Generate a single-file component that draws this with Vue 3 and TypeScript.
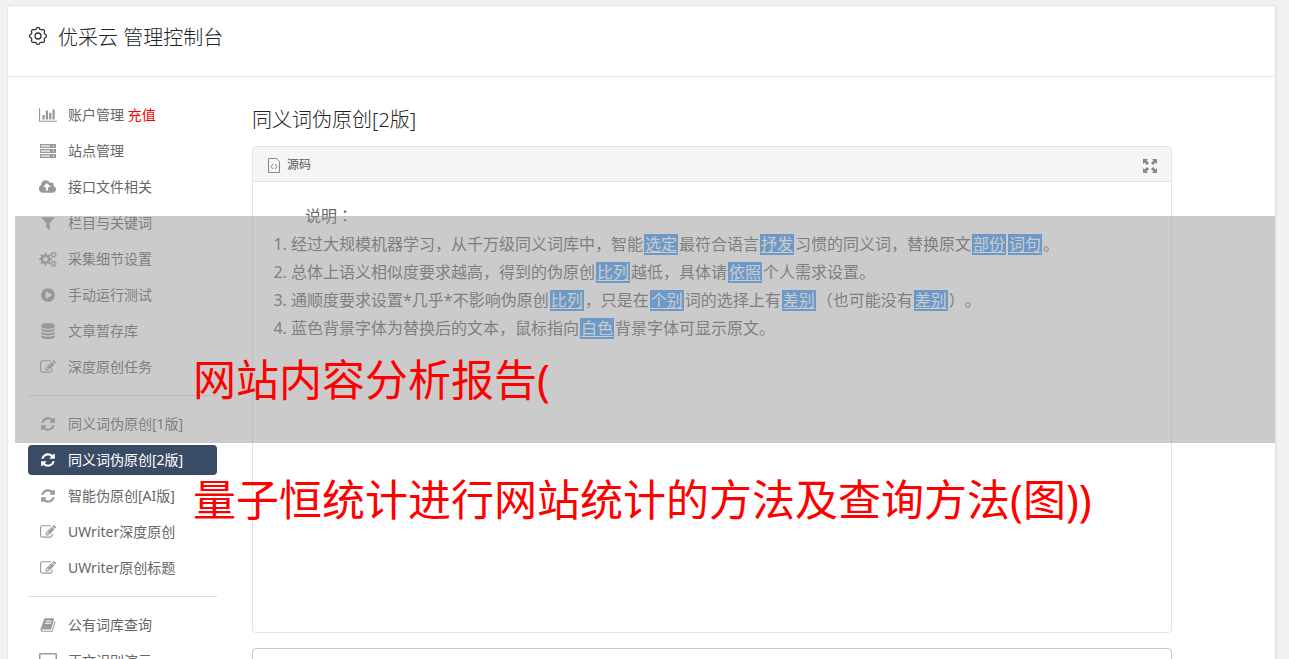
<script setup lang="ts">
interface Icon {
  box: string
  width: number
  d: string
  soft?: string
}

interface NavItem {
  label: string
  icon: string
  extra?: string
  active?: boolean
}

interface Piece {
  text: string
  swapped?: boolean
}

// Gear outline with square-shouldered teeth, followed by its round hole.
function gear(cx: number, cy: number, outer: number, inner: number, hole: number, teeth: number): string {
  const points: string[] = []
  const step = (Math.PI * 2) / teeth
  for (let i = 0; i < teeth; i++) {
    const a = i * step
    const corners: [number, number][] = [
      [-0.3, inner],
      [-0.2, outer],
      [0.2, outer],
      [0.3, inner],
    ]
    for (const [offset, r] of corners) {
      const x = cx + Math.cos(a + offset * step) * r
      const y = cy + Math.sin(a + offset * step) * r
      points.push(`${x.toFixed(1)} ${y.toFixed(1)}`)
    }
  }
  return `M${points.join('L')}ZM${cx - hole} ${cy}a${hole} ${hole} 0 1 0 ${hole * 2} 0a${hole} ${hole} 0 1 0 ${-hole * 2} 0z`
}

const icons: Record<string, Icon> = {
  chart: {
    box: '0 0 2048 1792',
    width: 18,
    d: 'M640 896v512h-256v-512h256zm384-512v1024h-256v-1024h256zm1024 1152v128h-2048v-1536h128v1408h1920zm-640-896v768h-256v-768h256zm384-384v1152h-256v-1152h256z',
  },
  server: {
    box: '0 0 16 16',
    width: 16,
    d: 'M0 1h16v4H0zM1 2v2h9V2zM13 2v2h1V2zM0 6h16v4H0zM1 7v2h9V7zM13 7v2h1V7zM0 11h16v4H0zM1 12v2h9v-2zM13 12v2h1v-2z',
    soft: 'M0 1h16v4H0zM0 6h16v4H0zM0 11h16v4H0z',
  },
  cloud: {
    box: '0 0 1920 1792',
    width: 18,
    d: 'M1216 864q0-14-9-23l-352-352q-9-9-23-9t-23 9l-351 351q-10 12-10 24 0 14 9 23t23 9h224v352q0 13 9.5 22.5t22.5 9.5h192q13 0 22.5-9.5t9.5-22.5v-352h224q13 0 22.5-9.5t9.5-22.5zm640 288q0 159-112.5 271.5t-271.5 112.5h-1088q-185 0-316.5-131.5t-131.5-316.5q0-130 70-240t188-165q-2-30-2-43 0-212 150-362t362-150q156 0 285.5 87t188.5 231q71-62 166-62 106 0 181 75t75 181q0 76-41 138 130 31 213.5 135.5t83.5 238.5z',
  },
  filter: {
    box: '0 0 1792 1792',
    width: 16,
    d: 'M1595 295q17 41-14 70l-493 493v742q0 42-39 59-13 5-25 5-27 0-45-19l-256-256q-19-19-19-45v-486l-493-493q-31-29-14-70 17-39 59-39h1280q42 0 59 39z',
  },
  cogs: {
    box: '0 0 18 16',
    width: 18,
    d: gear(6.5, 8.2, 6.4, 4.7, 2.3, 8) + gear(14.5, 3.8, 3.3, 2.3, 1.2, 6) + gear(14.5, 12.8, 3.3, 2.3, 1.2, 6),
  },
  play: {
    box: '0 0 1792 1792',
    width: 16,
    d: 'M896 128q209 0 385.5 103t279.5 279.5 103 385.5-103 385.5-279.5 279.5-385.5 103-385.5-103-279.5-279.5-103-385.5 103-385.5 279.5-279.5 385.5-103zm384 823q32-18 32-55t-32-55l-544-320q-31-19-64-1-32 19-32 56v640q0 37 32 56 16 8 32 8 17 0 32-9z',
  },
  database: {
    box: '0 0 1792 1792',
    width: 16,
    d: 'M896 768q237 0 443-43t325-127v170q0 69-103 128t-280 93.5-385 34.5-385-34.5-280-93.5-103-128v-170q119 84 325 127t443 43zm0 768q237 0 443-43t325-127v170q0 69-103 128t-280 93.5-385 34.5-385-34.5-280-93.5-103-128v-170q119 84 325 127t443 43zm0-384q237 0 443-43t325-127v170q0 69-103 128t-280 93.5-385 34.5-385-34.5-280-93.5-103-128v-170q119 84 325 127t443 43zm0-1152q208 0 385 34.5t280 93.5 103 128v128q0 69-103 128t-280 93.5-385 34.5-385-34.5-280-93.5-103-128v-128q0-69 103-128t280-93.5 385-34.5z',
  },
  edit: {
    box: '0 0 1792 1792',
    width: 16,
    d: 'M888 1184l116-116-152-152-116 116v56h96v96h56zm440-720q-16-16-33 1l-350 350q-17 17-1 33t33-1l350-350q17-17 1-33zm80 594v190q0 119-84.5 203.5t-203.5 84.5h-832q-119 0-203.5-84.5t-84.5-203.5v-832q0-119 84.5-203.5t203.5-84.5h832q63 0 117 25 15 7 18 23 3 17-9 29l-49 49q-14 14-32 8-23-6-45-6h-832q-66 0-113 47t-47 113v832q0 66 47 113t113 47h832q66 0 113-47t47-113v-126q0-13 9-22l64-64q15-15 35-7t20 29zm-96-738l288 288-672 672h-288v-288zm444 132l-92 92-288-288 92-92q28-28 68-28t68 28l152 152q28 28 28 68t-28 68z',
  },
  refresh: {
    box: '0 0 1792 1792',
    width: 16,
    d: 'M1639 1056q0 5-1 7-64 268-268 434.5t-478 166.5q-146 0-282.5-55t-243.5-157l-129 129q-19 19-45 19t-45-19-19-45v-448q0-26 19-45t45-19h448q26 0 45 19t19 45-19 45l-137 137q71 66 161 102t187 36q134 0 250-65t186-179q11-17 53-117 8-23 30-23h192q13 0 22.5 9.5t9.5 22.5zm25-800v448q0 26-19 45t-45 19h-448q-26 0-45-19t-19-45 19-45l138-138q-148-137-349-137-134 0-250 65t-186 179q-11 17-53 117-8 23-30 23h-199q-13 0-22.5-9.5t-9.5-22.5v-7q65-268 270-434.5t480-166.5q146 0 284 55.5t245 156.5l130-129q19-19 45-19t45 19 19 45z',
  },
  book: {
    box: '0 0 1792 1792',
    width: 16,
    d: 'M1703 478q40 57 18 129l-275 906q-19 64-76.5 107.5t-122.5 43.5h-923q-77 0-148.5-53.5t-99.5-131.5q-24-67-2-127 0-4 3-27t4-37q1-8-3-21.5t-3-19.5q2-11 8-21t16.5-23.5 16.5-23.5q23-38 45-91.5t30-91.5q3-10 .5-30t-.5-28q3-11 17-28t17-23q21-36 42-92t25-90q1-9-2.5-32t.5-28q4-13 22-30.5t22-22.5q19-26 42.5-84.5t27.5-96.5q1-8-3-25.5t-2-26.5q2-8 9-18t18-23 17-21q8-12 16.5-30.5t15-35 16-36 19.5-32 26.5-23.5 36-11.5 47.5 5.5l-1 3q38-9 51-9h761q74 0 114 56t18 130l-274 906q-36 119-71.5 153.5t-128.5 34.5h-869q-27 0-38 15-11 16-1 43 24 70 144 70h923q29 0 56-15.5t35-41.5l300-987q7-22 5-57 38 15 59 43zm-1064 2q-4 13 2 22.5t20 9.5h608q13 0 25.5-9.5t16.5-22.5l21-64q4-13-2-22.5t-20-9.5h-608q-13 0-25.5 9.5t-16.5 22.5zm-83 256q-4 13 2 22.5t20 9.5h608q13 0 25.5-9.5t16.5-22.5l21-64q4-13-2-22.5t-20-9.5h-608q-13 0-25.5 9.5t-16.5 22.5z',
  },
  screen: {
    box: '0 0 18 16',
    width: 18,
    d: 'M1.5 0h15a1.5 1.5 0 0 1 1.5 1.5v10a1.5 1.5 0 0 1-1.5 1.5h-5v3h-5v-3h-5a1.5 1.5 0 0 1-1.5-1.5v-10a1.5 1.5 0 0 1 1.5-1.5zM1.5 1.5v8h15v-8z',
  },
}

const groups: NavItem[][] = [
  [
    { label: '账户管理', icon: 'chart', extra: '充值' },
    { label: '站点管理', icon: 'server' },
    { label: '接口文件相关', icon: 'cloud' },
    { label: '栏目与关键词', icon: 'filter' },
    { label: '采集细节设置', icon: 'cogs' },
    { label: '手动运行测试', icon: 'play' },
    { label: '文章暂存库', icon: 'database' },
    { label: '深度原创任务', icon: 'edit' },
  ],
  [
    { label: '同义词伪原创[1版]', icon: 'refresh' },
    { label: '同义词伪原创[2版]', icon: 'refresh', active: true },
    { label: '智能伪原创[AI版]', icon: 'refresh' },
    { label: 'UWriter深度原创', icon: 'edit' },
    { label: 'UWriter原创标题', icon: 'edit' },
  ],
  [
    { label: '公有词库查询', icon: 'book' },
    { label: '正文识别演示', icon: 'screen' },
  ],
]

// Replaced words are written between braces.
function parse(line: string): Piece[] {
  return line
    .split(/(\{[^}]+\})/)
    .filter((part) => part !== '')
    .map((part) => (part.startsWith('{') ? { text: part.slice(1, -1), swapped: true } : { text: part }))
}

const notes: Piece[][] = [
  '经过大规模机器学习，从千万级同义词库中，智能{选定}最符合语言{抒发}习惯的同义词，替换原文{部份}{词句}。',
  '总体上语义相似度要求越高，得到的伪原创{比列}越低，具体请{依照}个人需求设置。',
  '通顺度要求设置*几乎*不影响伪原创{比列}，只是在{个别}词的选择上有{差别}（也可能没有{差别}）。',
  '蓝色背景字体为替换后的文本，鼠标指向{白色}背景字体可显示原文。',
].map(parse)

// Header gear: a closed wave of rounded teeth.
function wavyGear(cx: number, cy: number, radius: number, wave: number, teeth: number): string {
  const points: string[] = []
  const count = teeth * 12
  for (let i = 0; i < count; i++) {
    const a = (i / count) * Math.PI * 2
    const r = radius + wave * Math.tanh(2 * Math.cos(a * teeth))
    points.push(`${(cx + Math.cos(a) * r).toFixed(2)} ${(cy + Math.sin(a) * r).toFixed(2)}`)
  }
  return `M${points.join('L')}Z`
}
const titleGear = wavyGear(10, 10, 7.7, 0.7, 8)
</script>

<template>
  <div class="page">
    <div class="panel">
      <header class="top">
        <svg class="top-icon" viewBox="0 0 20 20" aria-hidden="true">
          <path :d="titleGear" />
          <circle cx="10" cy="10" r="3" />
        </svg>
        <h1>优采云 管理控制台</h1>
      </header>
      <div class="body">
        <nav class="side">
          <ul v-for="(group, g) in groups" :key="g">
            <li v-for="item in group" :key="item.label">
              <a href="#" :class="{ active: item.active }">
                <span class="nav-icon">
                  <svg :viewBox="icons[item.icon].box" :width="icons[item.icon].width" height="16" aria-hidden="true">
                    <path v-if="icons[item.icon].soft" class="soft" :d="icons[item.icon].soft" />
                    <path fill-rule="evenodd" :d="icons[item.icon].d" />
                  </svg>
                </span>
                <span>{{ item.label }}<em v-if="item.extra">&nbsp;{{ item.extra }}</em></span>
              </a>
            </li>
          </ul>
        </nav>
        <main>
          <h2>同义词伪原创[2版]</h2>
          <section class="editor">
            <div class="toolbar">
              <button type="button" class="source">
                <svg width="12" height="15" viewBox="0 0 12 15" aria-hidden="true">
                  <path d="M.5.5h8l3 3v11H.5z" />
                  <path d="M5 6L3 8.5L5 11M7 6L9 8.5L7 11" />
                </svg>
                源码
              </button>
              <button type="button" class="expand" aria-label="全屏">
                <svg width="14" height="14" viewBox="0 0 14 14" aria-hidden="true">
                  <path
                    d="M0 0h5L3.5 1.5L6 4L4 6L1.5 3.5L0 5zM14 0v5l-1.5-1.5L10 6L8 4l2.5-2.5L9 0zM0 14V9l1.5 1.5L4 8l2 2l-2.5 2.5L5 14zM14 14H9l1.5-1.5L8 10l2-2l2.5 2.5L14 9z"
                  />
                </svg>
              </button>
            </div>
            <div class="content">
              <p>说明<span class="colon">：</span></p>
              <ol>
                <li v-for="(line, i) in notes" :key="i">
                  <template v-for="(piece, j) in line" :key="j"
                    ><u v-if="piece.swapped">{{ piece.text }}</u
                    ><template v-else>{{ piece.text }}</template></template
                  >
                </li>
              </ol>
            </div>
          </section>
          <textarea aria-label="原文"></textarea>
        </main>
      </div>
    </div>
    <div class="banner">
      <p>网站内容分析报告(</p>
      <p>量子恒统计进行网站统计的方法及查询方法(图))</p>
    </div>
  </div>
</template>

<style>
body {
  margin: 0;
  background: #f1f1f1;
}
</style>

<style scoped>
.page {
  position: relative;
  box-sizing: border-box;
  height: 100vh;
  overflow: hidden;
  padding: 5px 12px 0 7px;
  background: #f1f1f1;
  color: #666;
  font-family: 'Noto Sans', 'Noto Sans CJK SC', sans-serif;
  font-size: 14px;
  font-weight: 400;
  text-spacing-trim: space-all;
}
h1,
h2,
p,
ul,
ol {
  margin: 0;
  padding: 0;
}
.panel {
  min-height: 100vh;
  border: 1px solid #e5e5e5;
  border-right-width: 2px;
  border-radius: 4px;
  background: #fff;
}
.top {
  display: flex;
  align-items: center;
  gap: 10px;
  height: 64px;
  padding: 0 20px 6px;
  border-bottom: 1px solid #e5e5e5;
}
.top-icon {
  width: 20px;
  height: 20px;
  margin-bottom: 4px;
  fill: none;
  stroke: #333;
  stroke-width: 1.3;
  stroke-linejoin: round;
}
h1,
h2 {
  color: #222;
  font-size: 20px;
  font-weight: 300;
  line-height: 30px;
}
.body {
  display: flex;
  align-items: flex-start;
  gap: 35px;
  padding: 23px 103px 0 20px;
}
.side {
  flex: none;
  width: 189px;
}
.side ul {
  display: flex;
  flex-direction: column;
  gap: 6px;
  list-style: none;
}
.side ul + ul {
  margin-top: 13px;
  padding-top: 13px;
  border-top: 1px solid #ddd;
}
.side a {
  display: flex;
  align-items: center;
  gap: 10px;
  height: 30px;
  padding-left: 10px;
  border-radius: 4px;
  color: #666;
  line-height: 30px;
  text-decoration: none;
  white-space: nowrap;
}
.nav-icon {
  display: flex;
  justify-content: center;
  width: 20px;
}
.nav-icon svg {
  fill: #999;
}
.nav-icon .soft {
  opacity: 0.4;
}
.side em {
  color: #f00;
  font-style: normal;
}
.side a.active {
  background: #3a4b66;
  color: #fff;
}
.active svg {
  fill: #fff;
}
main {
  flex: 1;
  min-width: 0;
  padding-top: 5px;
}
.editor {
  box-sizing: border-box;
  min-height: 487px;
  margin-top: 11px;
  border: 1px solid #e5e5e5;
  border-radius: 4px;
}
.toolbar {
  display: flex;
  align-items: center;
  justify-content: space-between;
  height: 34px;
  padding: 0 14px 0 15px;
  border-bottom: 1px solid #e5e5e5;
  border-radius: 4px 4px 0 0;
  background: #f5f5f5;
}
button {
  display: flex;
  align-items: center;
  padding: 0;
  border: 0;
  background: none;
  color: #555;
  font: inherit;
  font-size: 12px;
}
.source {
  gap: 7px;
}
.source svg {
  margin-top: 2px;
  fill: none;
  stroke: #888;
}
.expand svg {
  margin-top: 4px;
  fill: #888;
}
.content {
  padding: 19px 20px;
  font-size: 16px;
  line-height: 28px;
}
.content p {
  text-indent: 32px;
}
.colon {
  font-family: 'Noto Sans CJK JP', sans-serif;
}
ol {
  padding-left: 18px;
}
u {
  margin: 0 1px;
  padding: 0 1px;
  background: linear-gradient(#409af8, #409af8) center / 100% 21px no-repeat;
  color: #fff;
  text-underline-offset: 2px;
}
textarea {
  display: block;
  box-sizing: border-box;
  width: 100%;
  height: 120px;
  margin-top: 15px;
  border: 1px solid #c8c8c8;
  border-radius: 4px;
  background: #fff;
  resize: none;
}
.banner {
  position: absolute;
  top: 216px;
  left: 15px;
  right: 14px;
  box-sizing: border-box;
  height: 227px;
  padding: 104px 0 0 178px;
  background: rgba(151, 151, 151, 0.5);
  color: #f00;
  font-size: 43px;
  line-height: 120px;
  white-space: nowrap;
}
</style>
